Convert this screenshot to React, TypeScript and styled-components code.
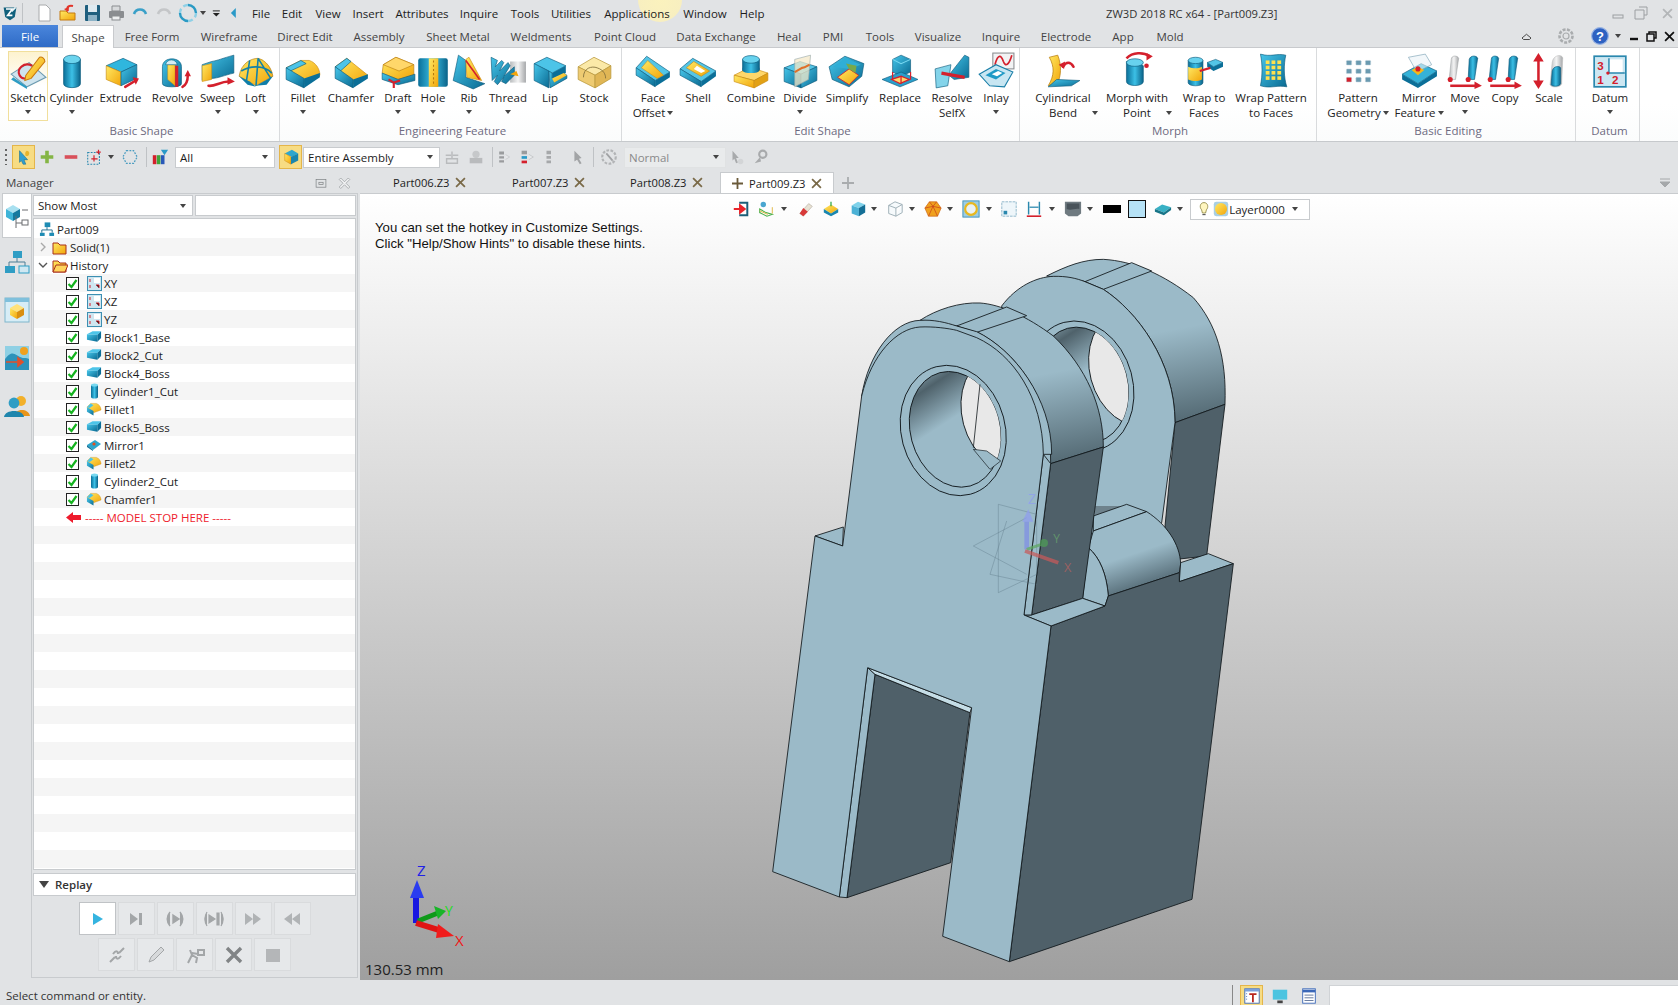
import React from "react";
import styled, { createGlobalStyle } from "styled-components";

const UI_FONT = `"Open Sans", "Noto Sans", "Liberation Sans", sans-serif`;

const GlobalStyle = createGlobalStyle`
  html, body { margin: 0; padding: 0; background: #e1e3e5; }
  #root { width: 1678px; height: 1005px; }
  * { box-sizing: border-box; }
`;

const Screen = styled.div`
  position: relative;
  width: 1678px;
  height: 1005px;
  overflow: hidden;
  display: flex;
  flex-direction: column;
  background: #e1e3e5;
  color: #1c1c1c;
  font-family: ${UI_FONT};
  font-size: 11.5px;
`;

const MouseGlow = styled.div`
  position: absolute;
  left: 638px;
  top: -22px;
  width: 44px;
  height: 44px;
  border-radius: 50%;
  background: radial-gradient(circle, #fbf2bd 0%, #f8efc0 70%, rgba(240, 230, 180, 0) 100%);
  pointer-events: none;
`;

/* ---------- title bar ---------- */
const TitleBar = styled.div`
  height: 26px;
  flex: none;
  display: flex;
  align-items: center;
  padding-left: 2px;
`;
const Slot = styled.span<{ $w: number; $ml?: number }>`
  flex: none;
  width: ${(p) => p.$w}px;
  margin-left: ${(p) => p.$ml ?? 0}px;
  display: flex;
  align-items: center;
  justify-content: center;
`;
const MenuItem = styled.span<{ $w: number }>`
  position: relative;
  flex: none;
  width: ${(p) => p.$w}px;
  text-align: center;
  font-size: 11.5px;
`;
const TitleText = styled.span`
  margin-left: 332px;
  font-size: 11.2px;
  color: #333;
  white-space: nowrap;
`;
const WindowButtons = styled.div`
  margin-left: auto;
  display: flex;
  align-items: center;
  padding-right: 3px;
`;

const Caret = styled.span`
  display: inline-block;
  width: 0;
  height: 0;
  border-left: 3px solid transparent;
  border-right: 3px solid transparent;
  border-top: 4px solid #444;
`;

/* ---------- ribbon tabs ---------- */
const TabsRow = styled.div`
  height: 22px;
  flex: none;
  display: flex;
  align-items: flex-end;
  padding-left: 2px;
  border-bottom: 1px solid #c8cacd;
  position: relative;
`;
const FileTab = styled.div`
  width: 56px;
  height: 22px;
  margin-right: 4px;
  background: linear-gradient(#4a86dc, #2f6bc6);
  color: #fff;
  font-size: 11.5px;
  display: flex;
  align-items: center;
  justify-content: center;
`;
const RibbonTab = styled.div<{ $w: number; $active?: boolean }>`
  flex: none;
  width: ${(p) => p.$w}px;
  height: ${(p) => (p.$active ? 23 : 22)}px;
  margin-bottom: ${(p) => (p.$active ? -1 : 0)}px;
  display: flex;
  align-items: center;
  justify-content: center;
  font-size: 11.5px;
  color: #444;
  white-space: nowrap;
  background: ${(p) => (p.$active ? "#fff" : "transparent")};
  border: ${(p) => (p.$active ? "1px solid #c8cacd" : "none")};
  border-bottom: none;
`;
const TabTools = styled.div`
  margin-left: auto;
  height: 22px;
  display: flex;
  align-items: center;
`;

/* ---------- ribbon ---------- */
const Ribbon = styled.div`
  height: 94px;
  flex: none;
  display: flex;
  background: linear-gradient(#ffffff 60%, #fbfcfc);
  border-bottom: 1px solid #c6c9cc;
`;
const RibbonGroup = styled.div<{ $w: number }>`
  flex: none;
  width: ${(p) => p.$w}px;
  display: flex;
  flex-direction: column;
  border-right: 1px solid #d9dbdd;
`;
const GroupItems = styled.div<{ $pad: number }>`
  height: 71px;
  margin-top: 4px;
  display: flex;
  padding-left: ${(p) => p.$pad}px;
`;
const GroupTitle = styled.div`
  height: 17px;
  line-height: 15px;
  padding-left: 4px;
  text-align: center;
  font-size: 11.5px;
  color: #6d6a80;
`;
const ToolButton = styled.div<{ $w: number; $hot?: boolean }>`
  flex: none;
  width: ${(p) => p.$w}px;
  height: 68px;
  display: flex;
  flex-direction: column;
  align-items: center;
  background: ${(p) => (p.$hot ? "linear-gradient(#fdf3cf, #fff 50%)" : "none")};
  outline: ${(p) => (p.$hot ? "1px solid #f1df9c" : "none")};
`;
const ToolIcon = styled.div`
  width: 38px;
  height: 38px;
  flex: none;
  svg { display: block; }
`;
const ToolLabel = styled.div`
  position: relative;
  line-height: 15px;
  text-align: center;
  white-space: nowrap;
  font-size: 11.5px;
  color: #222;
`;
const LabelCaret = styled(Caret)`
  margin-left: 2px;
  vertical-align: 2px;
`;
const SideCaret = styled(Caret)`
  position: absolute;
  left: 100%;
  top: 6px;
  margin-left: 15px;
`;
const BelowCaret = styled(Caret)`
  margin-top: 5px;
`;

/* ---------- toolbar ---------- */
const Toolbar = styled.div`
  height: 30px;
  flex: none;
  display: flex;
  align-items: center;
  padding-left: 2px;
`;
const Grip = styled.span`
  width: 2px;
  height: 16px;
  margin: 0 3px;
  background: repeating-linear-gradient(#666 0 2px, transparent 2px 5px);
`;
const ToolSep = styled.span<{ $w: number }>`
  flex: none;
  width: ${(p) => p.$w}px;
  height: 20px;
  display: flex;
  justify-content: center;
  &::before { content: ""; width: 1px; background: #bfc2c5; }
`;
const HotToggle = styled(Slot)`
  height: 24px;
  background: #f7dc83;
  border: 1px solid #e4b54a;
`;
const Combo = styled.div<{ $w: number; $ml?: number; $off?: boolean }>`
  flex: none;
  width: ${(p) => p.$w}px;
  margin-left: ${(p) => p.$ml ?? 0}px;
  height: 21px;
  display: flex;
  align-items: center;
  justify-content: space-between;
  padding: 0 6px 0 4px;
  font-size: 11.5px;
  color: ${(p) => (p.$off ? "#8a8a8a" : "#1c1c1c")};
  background: ${(p) => (p.$off ? "#e9ebec" : "#fff")};
  border: 1px solid ${(p) => (p.$off ? "#e0e2e3" : "#c8cbce")};
`;

/* ---------- main ---------- */
const Main = styled.div`
  flex: 1;
  min-height: 0;
  display: flex;
`;
const LeftColumn = styled.div`
  width: 360px;
  flex: none;
  display: flex;
  flex-direction: column;
`;
const ManagerHead = styled.div`
  height: 21px;
  flex: none;
  display: flex;
  align-items: center;
  padding: 0 8px 0 6px;
  font-size: 11.5px;
  color: #444;
`;
const HeadIcons = styled.span`
  margin-left: auto;
  display: flex;
  align-items: center;
  gap: 9px;
`;
const ManagerBody = styled.div`
  flex: 1;
  min-height: 0;
  display: flex;
  margin: 0 2px 2px 2px;
`;
const Rail = styled.div`
  width: 29px;
  flex: none;
  display: flex;
  flex-direction: column;
  align-items: center;
`;
const RailTab = styled.div<{ $active?: boolean }>`
  width: 29px;
  height: 45px;
  display: flex;
  align-items: center;
  justify-content: center;
  background: ${(p) => (p.$active ? "#fff" : "transparent")};
  border: ${(p) => (p.$active ? "1px solid #c8cbce" : "none")};
  border-right: none;
  margin-bottom: ${(p) => (p.$active ? 1 : 3)}px;
`;
const ManagerMain = styled.div`
  flex: 1;
  min-width: 0;
  display: flex;
  flex-direction: column;
  border: 1px solid #c8cbce;
  padding: 1px;
`;
const FilterRow = styled.div`
  height: 21px;
  flex: none;
  display: flex;
  gap: 2px;
  margin-bottom: 2px;
`;
const SearchBox = styled.div`
  flex: 1;
  background: #fff;
  border: 1px solid #c8cbce;
`;
const TreePanel = styled.div`
  flex: 1;
  min-height: 0;
  overflow: hidden;
  background: #fff;
  border: 1px solid #c8cbce;
  padding-top: 1px;
`;
const TreeRow = styled.div<{ $alt: boolean; $indent: number }>`
  height: 18px;
  display: flex;
  align-items: center;
  padding-left: ${(p) => p.$indent}px;
  background: ${(p) => (p.$alt ? "#f5f5f5" : "#fff")};
  font-size: 11.5px;
  white-space: nowrap;
`;
const Chevron = styled.span`
  width: 18px;
  flex: none;
  display: flex;
  justify-content: center;
`;
const CheckBox = styled.span`
  width: 13px;
  height: 13px;
  flex: none;
  margin-right: 7px;
  border: 1px solid #222;
  background: #fff;
  display: flex;
  align-items: center;
  justify-content: center;
`;
const RowIcon = styled.span`
  width: 16px;
  height: 16px;
  flex: none;
  margin-right: 2px;
  display: flex;
  align-items: center;
  justify-content: center;
`;
const StopText = styled.span`
  color: #ee1b2c;
  margin-left: 3px;
`;
const ReplayHead = styled.div`
  height: 23px;
  flex: none;
  margin-top: 3px;
  display: flex;
  align-items: center;
  gap: 6px;
  padding-left: 5px;
  background: #fff;
  border: 1px solid #c8cbce;
  font-weight: 600;
  font-size: 11.5px;
  color: #333;
`;
const ReplayCaret = styled.span`
  width: 0;
  height: 0;
  border-left: 5px solid transparent;
  border-right: 5px solid transparent;
  border-top: 7px solid #444;
`;
const ReplayPanel = styled.div`
  height: 80px;
  flex: none;
  display: flex;
  flex-direction: column;
  align-items: center;
  gap: 3px;
  padding-top: 6px;
`;
const ReplayRow = styled.div`
  display: flex;
  gap: 2px;
`;
const ReplayButton = styled.div<{ $on?: boolean }>`
  width: 37px;
  height: 33px;
  display: flex;
  align-items: center;
  justify-content: center;
  background: ${(p) => (p.$on ? "#fff" : "#e6e8ea")};
  border: 1px solid ${(p) => (p.$on ? "#c0c3c6" : "#d9dbdd")};
`;

const RightColumn = styled.div`
  flex: 1;
  min-width: 0;
  display: flex;
  flex-direction: column;
`;
const DocTabs = styled.div`
  height: 21px;
  flex: none;
  display: flex;
  align-items: center;
  position: relative;
`;
const DocTab = styled.div<{ $w: number; $active?: boolean; $pl: number }>`
  flex: none;
  width: ${(p) => p.$w}px;
  height: 21px;
  padding-left: ${(p) => p.$pl}px;
  display: flex;
  align-items: center;
  gap: 6px;
  font-size: 11.2px;
  white-space: nowrap;
  background: ${(p) => (p.$active ? "#fff" : "transparent")};
  border: ${(p) => (p.$active ? "1px solid #c8cbce" : "none")};
  border-bottom: none;
`;
const DocTabsEnd = styled.span`
  margin-left: auto;
  padding-right: 6px;
  display: flex;
`;
const Viewport = styled.div`
  position: relative;
  flex: 1;
  min-height: 0;
  overflow: hidden;
  background: linear-gradient(#ffffff 0%, #fbfbfb 4%, #9f9f9f 100%);
  border-top: 1px solid #c8cbce;
`;
const ModelCanvas = styled.svg`
  position: absolute;
  left: 0;
  top: 0;
  width: 100%;
  height: 100%;
`;
const ViewBar = styled.div`
  position: relative;
  height: 30px;
  display: flex;
  align-items: center;
  padding-left: 369px;
`;
const Hints = styled.div`
  position: absolute;
  left: 15px;
  top: 26px;
  font-family: "Liberation Sans", Arial, sans-serif;
  font-size: 13.2px;
  line-height: 16px;
  color: #111;
`;
const Distance = styled.div`
  position: absolute;
  left: 5px;
  bottom: 1px;
  font-size: 15px;
  color: #222;
`;

/* ---------- status ---------- */
const StatusBar = styled.div`
  height: 25px;
  flex: none;
  display: flex;
  align-items: center;
  padding: 5px 0 0 6px;
  font-size: 11.5px;
  color: #333;
`;
const StatusTools = styled.div`
  margin-left: auto;
  height: 20px;
  display: flex;
  align-items: flex-end;
`;
const StatusSep = styled.span`
  width: 1px;
  height: 20px;
  background: #888;
  margin-right: 7px;
`;
const StatusHot = styled(Slot)`
  height: 20px;
  background: #f7dc83;
  border: 1px solid #e4b54a;
  border-bottom: none;
`;
const StatusField = styled.div`
  width: 349px;
  height: 20px;
  margin-left: 8px;
  background: #fff;
  border: 1px solid #d0d3d6;
  border-bottom: none;
  border-right: none;
`;

/* ---------- shared gradients ---------- */
const GradientDefs = styled.svg`
  position: absolute;
  width: 0;
  height: 0;
`;
const Defs = () => (
  <GradientDefs>
    <defs>
      <linearGradient id="bl" x1="0" y1="0" x2="1" y2="1">
        <stop offset="0" stopColor="#46c6ea" />
        <stop offset="1" stopColor="#0a6a92" />
      </linearGradient>
      <linearGradient id="bh" x1="0" y1="0" x2="1" y2="0">
        <stop offset="0" stopColor="#0a6f98" />
        <stop offset=".5" stopColor="#3cc0e6" />
        <stop offset="1" stopColor="#0a6288" />
      </linearGradient>
      <linearGradient id="yl" x1="0" y1="0" x2="1" y2="1">
        <stop offset="0" stopColor="#ffe964" />
        <stop offset="1" stopColor="#f2a50a" />
      </linearGradient>
      <linearGradient id="gy" x1="0" y1="0" x2="1" y2="0">
        <stop offset="0" stopColor="#b9bcbe" />
        <stop offset=".5" stopColor="#f4f4f4" />
        <stop offset="1" stopColor="#a6a8aa" />
      </linearGradient>
      <linearGradient id="earA" gradientUnits="userSpaceOnUse" x1="900" y1="390" x2="950" y2="650">
        <stop offset="0" stopColor="#9bbac8" />
        <stop offset="1" stopColor="#566c76" />
      </linearGradient>
      <linearGradient id="earB" gradientUnits="userSpaceOnUse" x1="1270" y1="260" x2="1320" y2="525">
        <stop offset="0" stopColor="#9bbac8" />
        <stop offset="1" stopColor="#566c76" />
      </linearGradient>
      <linearGradient id="wall" x1="0" y1="0" x2=".25" y2="1">
        <stop offset="0" stopColor="#8ba6b2" />
        <stop offset=".17" stopColor="#4f626b" />
        <stop offset=".5" stopColor="#9bbac8" />
        <stop offset="1" stopColor="#9bbac8" />
      </linearGradient>
      <linearGradient id="bump" gradientUnits="userSpaceOnUse" x1="1100" y1="890" x2="1148" y2="1032">
        <stop offset=".35" stopColor="#9bbac8" />
        <stop offset="1" stopColor="#5c737e" />
      </linearGradient>
    </defs>
  </GradientDefs>
);

/* ---------- icons ---------- */
const line = { stroke: "#0c5a7c", strokeWidth: 0.6 };

const CubeBY = () => (
  <>
    <path d="M4 13 20 6 33 12 18 19Z" fill="#2fb6de" {...line} />
    <path d="M4 13 18 19V32L4 26Z" fill="url(#yl)" stroke="#c98a10" strokeWidth=".6" />
    <path d="M18 19 33 12V25L18 32Z" fill="url(#bl)" {...line} />
  </>
);
const RedArrow = ({ d }: { d: string }) => <path d={d} fill="none" stroke="#d4202c" strokeWidth="2.4" strokeLinecap="round" />;

const ribbonArt: Record<string, React.ReactNode> = {
  sketch: (
    <>
      <path d="M2 21 19 10 35 24 17 33Z" fill="#cfe4ee" stroke="#6d9bb1" />
      <path d="M4 24 17 33V35L2 26Z" fill="#2d9cc4" />
      <path d="M22 13C14 9 7 16 10 22 12 26 17 26 20 23" fill="none" stroke="#d4202c" strokeWidth="2" />
      <path d="M16 22 29 5C31 4 34 6 34 9L21 25 15 27Z" fill="url(#yl)" stroke="#c9780f" />
    </>
  ),
  cylinder: (
    <>
      <path d="M10 7V30C10 35 26 35 26 30V7Z" fill="url(#bh)" stroke="#0a5a7c" strokeWidth=".6" />
      <ellipse cx="18" cy="7" rx="8" ry="4" fill="#6cd4ee" stroke="#0a5a7c" strokeWidth=".6" />
    </>
  ),
  extrude: (
    <>
      <CubeBY />
      <RedArrow d="M22 33 32 27" />
      <path d="M29 24 35 25 32 31Z" fill="#d4202c" />
    </>
  ),
  revolve: (
    <>
      <path d="M8 14C8 4 26 4 26 14V30C26 34 8 34 8 30Z" fill="url(#bl)" stroke="#0a5a7c" strokeWidth=".6" />
      <path d="M13 12H20V32L13 26Z" fill="url(#yl)" stroke="#c98a10" strokeWidth=".5" />
      <path d="M11 12C12 6 21 6 22 12Z" fill="#d5ecf4" stroke="#0a5a7c" strokeWidth=".5" />
      <path d="M20 13H23V33L20 33Z" fill="#d4202c" />
      <RedArrow d="M27 33C31 31 32 27 32 22" />
      <path d="M29 23 32 17 35 23Z" fill="#d4202c" />
    </>
  ),
  sweep: (
    <>
      <path d="M3 12 12 9C18 8 22 6 33 3V20C24 22 18 25 12 25L3 27Z" fill="url(#bl)" {...line} />
      <path d="M3 13 12 11V26L3 28Z" fill="url(#yl)" stroke="#c98a10" strokeWidth=".5" />
      <RedArrow d="M9 32C15 33 20 28 28 28" />
      <path d="M27 24 34 28 27 31Z" fill="#d4202c" />
    </>
  ),
  loft: (
    <>
      <path d="M2 23C4 10 14 6 20 6 28 8 33 16 34 23L18 32Z" fill="url(#yl)" stroke="#a9750c" strokeWidth=".6" />
      <path d="M12 8 9 27M20 6 18 32M20 6 32 25M4 18C14 12 26 13 33 20" fill="none" stroke="#1282aa" strokeWidth="1.5" />
      <path d="M2 23 12 28 18 33 10 31Z" fill="#0f7ea8" />
      <path d="M18 32 34 23 28 31Z" fill="#0f7ea8" />
    </>
  ),
  fillet: (
    <>
      <path d="M2 15 16 8H24C30 10 34 16 34 22L19 30Z" fill="url(#yl)" stroke="#c98a10" strokeWidth=".6" />
      <path d="M2 15 16 8 21 11 6 18Z" fill="#4cc4e8" {...line} />
      <path d="M2 15 19 25V34L2 26Z" fill="url(#bl)" {...line} />
      <path d="M19 25 34 20V24L19 34Z" fill="#0b6f98" />
    </>
  ),
  chamfer: (
    <>
      <path d="M3 14 14 6 34 22 20 30Z" fill="url(#yl)" stroke="#c98a10" strokeWidth=".6" />
      <path d="M3 14 14 6 18 9 8 18Z" fill="#4cc4e8" {...line} />
      <path d="M3 14 20 26V34L3 25Z" fill="url(#bl)" {...line} />
      <path d="M20 26 34 21V25L20 34Z" fill="#0b6f98" />
    </>
  ),
  draft: (
    <>
      <path d="M4 12 16 5 33 12 33 22 18 26 3 20Z" fill="url(#yl)" stroke="#b97d0e" strokeWidth=".6" />
      <path d="M4 12 16 5 33 12 19 18Z" fill="#ffd76a" stroke="#b97d0e" strokeWidth=".6" />
      <path d="M3 20 18 26 34 21 34 27 18 31 3 26Z" fill="url(#bl)" {...line} />
      <path d="M14 34 14 29 9 26M14 29 20 27" fill="none" stroke="#d4202c" strokeWidth="2" />
    </>
  ),
  hole: (
    <>
      <rect x="4" y="6" width="28" height="27" rx="2" fill="url(#bh)" />
      <rect x="14" y="6" width="9" height="27" fill="url(#yl)" />
      <path d="M18.5 8V32" stroke="#b57b10" strokeWidth="1" strokeDasharray="2 2" />
    </>
  ),
  rib: (
    <>
      <path d="M8 3 15 8V24L33 30 22 35 3 27Z" fill="url(#bl)" {...line} />
      <path d="M15 7 18 5 30 27 16 24Z" fill="url(#yl)" stroke="#c98a10" strokeWidth=".6" />
      <path d="M15 8 28 26" stroke="#d4202c" strokeWidth="1.5" />
    </>
  ),
  thread: (
    <>
      <rect x="20" y="9" width="15" height="20" fill="url(#gy)" />
      <path d="M2 5 8 8 6 14 12 8 14 10 10 18 18 10 20 13 14 23 24 14V22L16 30 12 28 14 24 8 31 5 28 8 22 3 27Z" fill="url(#bl)" {...line} />
      <path d="M20 21 26 18 28 23Z" fill="#f2a50a" />
    </>
  ),
  lip: (
    <>
      <path d="M3 11 15 5 33 13 20 20Z" fill="#4cc4e8" {...line} />
      <path d="M3 11 17 18V34L3 27Z" fill="url(#bl)" {...line} />
      <path d="M17 18 20 20V25L31 20 34 22V25L18 34Z" fill="url(#bl)" {...line} />
      <path d="M20 20 33 13V20L20 25Z" fill="#0b6f98" />
      <path d="M20 25 31 20 34 22 22 29Z" fill="url(#yl)" />
    </>
  ),
  stock: (
    <>
      <path d="M3 14 18 5 34 13 19 22Z" fill="#fbe9a8" stroke="#b9983c" strokeWidth=".7" />
      <path d="M3 14 19 22V34L3 26Z" fill="#eecb72" stroke="#b9983c" strokeWidth=".7" />
      <path d="M19 22 34 13V25L19 34Z" fill="#e0b655" stroke="#b9983c" strokeWidth=".7" />
      <path d="M8 24C8 15 16 13 21 15 27 17 29 21 29 25" fill="none" stroke="#7f6d3a" strokeWidth=".8" />
    </>
  ),
  faceOffset: (
    <>
      <path d="M2 15 12 4 34 19 20 27Z" fill="#53c5e6" {...line} />
      <path d="M7 15 13 8 28 22 22 25Z" fill="url(#yl)" stroke="#c98a10" strokeWidth=".5" />
      <path d="M2 15 20 27V33L2 22Z" fill="url(#bl)" {...line} />
      <path d="M20 27 34 19V24L20 33Z" fill="#0b6f98" />
    </>
  ),
  shell: (
    <>
      <path d="M1 16 13 6 35 18 21 28Z" fill="#53c5e6" {...line} />
      <path d="M7 15 14 9 29 18 21 23Z" fill="url(#yl)" stroke="#c98a10" strokeWidth=".6" />
      <path d="M14 16 17 13 25 18 21 20Z" fill="#fff" />
      <path d="M1 16 21 28V33L1 22Z" fill="url(#bl)" {...line} />
      <path d="M21 28 35 18V23L21 33Z" fill="#0b6f98" />
    </>
  ),
  combine: (
    <>
      <path d="M10 7V24C10 28 26 28 26 24V7Z" fill="url(#bh)" {...line} />
      <ellipse cx="18" cy="7" rx="8" ry="3.6" fill="#67d2ee" {...line} />
      <path d="M2 22 12 17H25L34 20 21 27Z" fill="#ffd76a" stroke="#c98a10" strokeWidth=".6" />
      <path d="M10 17C10 21 26 21 26 17L26 15H10Z" fill="url(#bh)" />
      <path d="M2 22 21 27V34L2 28Z" fill="url(#yl)" stroke="#c98a10" strokeWidth=".6" />
      <path d="M21 27 34 20V27L21 34Z" fill="#e2a115" stroke="#c98a10" strokeWidth=".6" />
    </>
  ),
  divide: (
    <>
      <path d="M3 15 18 9 34 14 19 21Z" fill="#53c5e6" {...line} />
      <path d="M3 15 19 21V34L3 28Z" fill="url(#bl)" {...line} />
      <path d="M19 21 34 14V27L19 34Z" fill="url(#bl)" {...line} />
      <path d="M13 7 28 3 26 26 13 33Z" fill="#f4e8c8" fillOpacity=".75" stroke="#9aa" strokeWidth=".6" />
      <path d="M13 19 20 15C23 15 25 13 27 12" fill="none" stroke="#e0702a" strokeWidth="2" />
    </>
  ),
  simplify: (
    <>
      <path d="M1 14 16 4 34 11 32 23 20 33 4 26Z" fill="url(#bl)" {...line} />
      <path d="M5 14 17 6 31 12 20 16Z" fill="#2faed6" />
      <path d="M9 24 20 16 29 22 20 31Z" fill="url(#yl)" stroke="#d4202c" strokeWidth=".8" />
      <path d="M17 11 27 13 26 20 20 16Z" fill="#78a94a" />
    </>
  ),
  replace: (
    <>
      <path d="M11 7 19 3 28 7 28 19 19 23 11 19Z" fill="url(#bl)" {...line} />
      <path d="M11 7 19 11 28 7" fill="none" stroke="#7bdaf2" />
      <path d="M1 26 19 19 35 26 18 33Z" fill="#2a9fcb" {...line} />
      <path d="M10 26 19 23 27 26 18 30Z" fill="#ffd76a" stroke="#d4202c" strokeWidth="1.2" />
      <path d="M11 19V26M28 19V26M19 23V30" stroke="#d4202c" strokeWidth="1.2" />
    </>
  ),
  resolve: (
    <>
      <path d="M2 16 17 12 14 32 3 34Z" fill="#84d4ea" {...line} />
      <path d="M15 22 30 3 34 5V24L20 26Z" fill="url(#bl)" {...line} />
      <path d="M8 20 30 24" stroke="#d4202c" strokeWidth="3" />
    </>
  ),
  inlay: (
    <>
      <rect x="15" y="1" width="20" height="15" fill="#f2f3f4" stroke="#8a8d90" />
      <path d="M17 12C20 1 23 3 25 9 27 14 30 13 33 3" fill="none" stroke="#d4202c" strokeWidth="1.6" />
      <path d="M2 21 18 12 34 19 26 33 12 32Z" fill="#c8e6f2" stroke="#1a7fa8" />
      <path d="M8 22 18 16 27 20 18 26Z" fill="#1f9ac6" />
      <path d="M14 21 20 18 24 20 19 23Z" fill="#fff" />
    </>
  ),
  bend: (
    <>
      <path d="M5 5 13 3C17 13 16 23 13 29L4 32C10 22 10 14 5 5Z" fill="url(#yl)" stroke="#b97d0e" strokeWidth=".7" />
      <path d="M12 26 34 27 26 32 4 33Z" fill="url(#bl)" {...line} />
      <RedArrow d="M18 14C21 9 25 9 28 14" />
      <path d="M14 12 20 9 19 16Z" fill="#d4202c" />
    </>
  ),
  morph: (
    <>
      <path d="M8 9V28C8 33 24 33 24 28V13L18 9Z" fill="url(#bh)" {...line} />
      <ellipse cx="16" cy="10" rx="8" ry="3.6" fill="#67d2ee" {...line} />
      <path d="M8 6C14 0 24 0 30 4" fill="none" stroke="#d4202c" strokeWidth="2.4" />
      <path d="M27 1 33 4 27 8Z" fill="#d4202c" />
      <circle cx="27" cy="13" r="2.2" fill="#d4202c" />
    </>
  ),
  wrap: (
    <>
      <path d="M3 8V29C3 33 17 33 17 29V8Z" fill="url(#bh)" {...line} />
      <ellipse cx="10" cy="8" rx="7" ry="3" fill="#67d2ee" {...line} />
      <path d="M3 14C8 16 12 16 16 14V26C12 28 8 28 3 26Z" fill="url(#yl)" />
      <path d="M21 10 29 7 36 10 27 14Z" fill="#53c5e6" {...line} />
      <path d="M21 10 27 14V18L21 14ZM27 14 36 10V14L27 18Z" fill="#0b6f98" />
      <path d="M14 18 24 15" stroke="#d4202c" strokeWidth="2.2" />
    </>
  ),
  wrapPattern: (
    <>
      <path d="M8 2C18 5 24 1 32 3 30 12 30 24 33 33 24 31 18 35 8 32 10 22 10 12 8 2Z" fill="url(#bl)" {...line} />
      {[10, 15, 20, 25].map((y) => [13, 18.5, 24].map((x) => <rect key={`${x}-${y}`} x={x} y={y - 2} width="3.6" height="3.4" fill="#ffe14d" />))}
    </>
  ),
  pattern: (
    <>
      {[8, 16, 24].map((y, r) =>
        [7, 16, 25].map((x, c) => (
          <rect key={`${r}-${c}`} x={x} y={y} width="5" height="4.4" rx=".8" fill={r === 2 && c === 0 ? "#d4202c" : "#6a9ab0"} stroke="#c5d6de" strokeWidth=".5" />
        ))
      )}
    </>
  ),
  mirror: (
    <>
      <path d="M2 21 20 11 35 18 17 30Z" fill="#35b2d8" {...line} />
      <path d="M2 21 17 30V34L2 26ZM17 30 35 18V23L17 34Z" fill="#0b6f98" />
      <path d="M8 5 24 2 30 12 16 19Z" fill="#e9f2f6" fillOpacity=".6" stroke="#7ba2b4" strokeWidth=".6" />
      <path d="M11 17 17 14 23 17 17 22Z" fill="#f6b818" />
      <circle cx="17" cy="16" r="2.4" fill="#d4202c" />
    </>
  ),
  move: (
    <>
      <path d="M5 7C5 3 11 3 12 6L9 26H3Z" fill="url(#gy)" stroke="#9b9ea0" strokeWidth=".5" />
      <path d="M22 7C23 3 29 3 30 6L27 26H21Z" fill="url(#bh)" {...line} />
      <circle cx="4" cy="26" r="2.4" fill="#d4202c" />
      <circle cx="21" cy="26" r="2.4" fill="#d4202c" />
      <path d="M4 32H28" stroke="#d4202c" strokeWidth="2.4" />
      <path d="M27 28 34 32 27 35Z" fill="#d4202c" />
    </>
  ),
  copy: (
    <>
      <path d="M5 7C5 3 11 3 12 6L9 26H3Z" fill="url(#bh)" {...line} />
      <path d="M22 7C23 3 29 3 30 6L27 26H21Z" fill="url(#bh)" {...line} />
      <circle cx="4" cy="26" r="2.4" fill="#d4202c" />
      <circle cx="21" cy="26" r="2.4" fill="#d4202c" />
      <path d="M4 32H28" stroke="#d4202c" strokeWidth="2.4" />
      <path d="M27 28 34 32 27 35Z" fill="#d4202c" />
    </>
  ),
  scale: (
    <>
      <path d="M8 5V31" stroke="#d4202c" strokeWidth="2.4" />
      <path d="M3 9 8 1 13 9ZM3 27 8 35 13 27Z" fill="#d4202c" />
      <path d="M21 10C22 2 31 2 31 6L30 30C29 34 20 34 19 31Z" fill="url(#gy)" stroke="#bbb" strokeWidth=".5" />
      <path d="M21 18C22 13 28 13 29 15L29 30C28 33 21 33 20 31Z" fill="url(#bh)" {...line} />
    </>
  ),
  datum: (
    <>
      <rect x="3" y="4" width="30" height="29" fill="#cde7f2" stroke="#2a88ae" strokeWidth="1.6" />
      <rect x="17" y="7" width="13" height="13" fill="#fff" />
      <path d="M17 6V20H32" fill="none" stroke="#2a88ae" strokeWidth="1.4" />
      <text x="6" y="17" fontFamily="Liberation Sans, sans-serif" fontSize="11" fontWeight="700" fill="#d4202c">3</text>
      <text x="6" y="30" fontFamily="Liberation Sans, sans-serif" fontSize="11" fontWeight="700" fill="#d4202c">1</text>
      <text x="20" y="30" fontFamily="Liberation Sans, sans-serif" fontSize="11" fontWeight="700" fill="#d4202c">2</text>
      <circle cx="16" cy="20" r="1.6" fill="#d4202c" />
    </>
  ),
};

type Tool = { id: string; lines: string[]; w: number; caret?: "below" | "inline" | "side" };
type Group = { title: string; w: number; pad: number; tools: Tool[] };

const groups: Group[] = [
  {
    title: "Basic Shape", w: 280, pad: 9,
    tools: [
      { id: "sketch", lines: ["Sketch"], w: 38, caret: "below" },
      { id: "cylinder", lines: ["Cylinder"], w: 49, caret: "below" },
      { id: "extrude", lines: ["Extrude"], w: 49 },
      { id: "revolve", lines: ["Revolve"], w: 55 },
      { id: "sweep", lines: ["Sweep"], w: 35, caret: "below" },
      { id: "loft", lines: ["Loft"], w: 41, caret: "below" },
    ],
  },
  {
    title: "Engineering Feature", w: 342, pad: 1,
    tools: [
      { id: "fillet", lines: ["Fillet"], w: 44, caret: "below" },
      { id: "chamfer", lines: ["Chamfer"], w: 52 },
      { id: "draft", lines: ["Draft"], w: 42, caret: "below" },
      { id: "hole", lines: ["Hole"], w: 28, caret: "below" },
      { id: "rib", lines: ["Rib"], w: 44, caret: "below" },
      { id: "thread", lines: ["Thread"], w: 34, caret: "below" },
      { id: "lip", lines: ["Lip"], w: 50 },
      { id: "stock", lines: ["Stock"], w: 38 },
    ],
  },
  {
    title: "Edit Shape", w: 398, pad: 8,
    tools: [
      { id: "faceOffset", lines: ["Face", "Offset"], w: 46, caret: "inline" },
      { id: "shell", lines: ["Shell"], w: 44 },
      { id: "combine", lines: ["Combine"], w: 62 },
      { id: "divide", lines: ["Divide"], w: 36, caret: "below" },
      { id: "simplify", lines: ["Simplify"], w: 58 },
      { id: "replace", lines: ["Replace"], w: 48 },
      { id: "resolve", lines: ["Resolve", "SelfX"], w: 56 },
      { id: "inlay", lines: ["Inlay"], w: 32, caret: "below" },
    ],
  },
  {
    title: "Morph", w: 297, pad: 6,
    tools: [
      { id: "bend", lines: ["Cylindrical", "Bend"], w: 74, caret: "side" },
      { id: "morph", lines: ["Morph with", "Point"], w: 74, caret: "side" },
      { id: "wrap", lines: ["Wrap to", "Faces"], w: 60 },
      { id: "wrapPattern", lines: ["Wrap Pattern", "to Faces"], w: 74 },
    ],
  },
  {
    title: "Basic Editing", w: 259, pad: 5,
    tools: [
      { id: "pattern", lines: ["Pattern", "Geometry"], w: 72, caret: "inline" },
      { id: "mirror", lines: ["Mirror", "Feature"], w: 50, caret: "inline" },
      { id: "move", lines: ["Move"], w: 42, caret: "below" },
      { id: "copy", lines: ["Copy"], w: 38 },
      { id: "scale", lines: ["Scale"], w: 50 },
    ],
  },
  {
    title: "Datum", w: 64, pad: 4,
    tools: [{ id: "datum", lines: ["Datum"], w: 60, caret: "below" }],
  },
];

const menus: [string, number][] = [
  ["File", 30], ["Edit", 32], ["View", 40], ["Insert", 40], ["Attributes", 68], ["Inquire", 46],
  ["Tools", 46], ["Utilities", 46], ["Applications", 86], ["Window", 50], ["Help", 44],
];
const ribbonTabs: [string, number][] = [
  ["Shape", 52], ["Free Form", 76], ["Wireframe", 78], ["Direct Edit", 74], ["Assembly", 74],
  ["Sheet Metal", 84], ["Weldments", 82], ["Point Cloud", 86], ["Data Exchange", 96], ["Heal", 50],
  ["PMI", 38], ["Tools", 56], ["Visualize", 60], ["Inquire", 66], ["Electrode", 64], ["App", 50], ["Mold", 44],
];

const Art = ({ s, vb = 36, children }: { s: number; vb?: number; children: React.ReactNode }) => (
  <svg width={s} height={s} viewBox={`0 0 ${vb} ${vb}`}>{children}</svg>
);

/* small glyphs, all on a 20 unit grid */
const small: Record<string, React.ReactNode> = {
  logo: (
    <>
      <path d="M2 3H18L16 15 10 19 4 15Z" fill="#10607c" />
      <path d="M5 5 13 5 7 13H13" fill="none" stroke="#fff" strokeWidth="2" />
      <path d="M12 8 17 3" stroke="#e8f4f8" strokeWidth="2" />
    </>
  ),
  newDoc: <path d="M5 2H12L16 6V18H5Z" fill="#fff" stroke="#a8aaac" />,
  open: (
    <>
      <path d="M2 8H8L10 10H17V17H2Z" fill="url(#yl)" stroke="#c47a10" />
      <path d="M10 8C8 4 11 2 15 3" fill="none" stroke="#e2342a" strokeWidth="2" />
      <path d="M6 6 11 4 10 9Z" fill="#e2342a" />
    </>
  ),
  save: (
    <>
      <rect x="3" y="2" width="15" height="16" rx="1" fill="#1f5f7e" />
      <rect x="6" y="2" width="9" height="7" fill="#dfeaf0" />
      <rect x="6" y="12" width="9" height="6" fill="#8cb2c6" />
    </>
  ),
  print: (
    <>
      <rect x="3" y="8" width="15" height="7" rx="1" fill="#8a8d90" />
      <path d="M6 8V3H14V8Z" fill="#d8dadc" stroke="#8a8d90" />
      <rect x="6" y="13" width="8" height="4" fill="#eceeef" stroke="#8a8d90" />
    </>
  ),
  undo: <path d="M4 11C6 5 14 5 16 11" fill="none" stroke="#3aa0c8" strokeWidth="2.6" />,
  redo: <path d="M4 11C6 5 14 5 16 11" fill="none" stroke="#c4c6c8" strokeWidth="2.6" />,
  rotate: (
    <>
      <path d="M10 2A8 8 0 0 1 18 10M10 18A8 8 0 0 1 2 10" fill="none" stroke="#2a9ac4" strokeWidth="2.4" />
      <path d="M10 2A8 8 0 0 0 2 10M10 18A8 8 0 0 0 18 10" fill="none" stroke="#8fd0e6" strokeWidth="2.4" strokeDasharray="5 3" />
    </>
  ),
  bars: (
    <>
      <path d="M4 7H14" stroke="#222" strokeWidth="1.4" />
      <path d="M4 10H14L9 15Z" fill="#222" />
    </>
  ),
  leftBlue: <path d="M14 3 7 10 14 17Z" fill="#2a9ac8" />,
  gear: (
    <>
      <circle cx="10" cy="10" r="6.5" fill="none" stroke="#a9acae" strokeWidth="2.6" strokeDasharray="3 1.4" />
      <circle cx="10" cy="10" r="3" fill="none" stroke="#a9acae" strokeWidth="1.2" />
    </>
  ),
  help: (
    <>
      <circle cx="10" cy="10" r="8.4" fill="#2e62c2" stroke="#9db7e4" strokeWidth="1.2" />
      <text x="10" y="14.5" textAnchor="middle" fontFamily="Liberation Sans, sans-serif" fontSize="13" fontWeight="700" fill="#fff">?</text>
    </>
  ),
  up: <path d="M4 12 10 7 16 12 14 14H6Z" fill="none" stroke="#444" strokeWidth="1.3" />,
  cursor: (
    <>
      <path d="M5 3 14 13H10L12 18 9 18 7 14 5 16Z" fill="#2f9fd0" stroke="#146b90" strokeWidth=".6" />
      <path d="M13 3C16 3 17 7 14 9H12C11 7 11 4 13 3Z" fill="#e9b52a" />
    </>
  ),
  plus: <path d="M10 3V17M3 10H17" stroke="#84b545" strokeWidth="4" />,
  minus: <path d="M3 10H17" stroke="#d9505a" strokeWidth="4" />,
  dotBox: (
    <>
      <rect x="3" y="5" width="13" height="13" fill="none" stroke="#2a88ae" strokeWidth="1.2" strokeDasharray="2 1.4" />
      <path d="M10 8V15M7 12H14M15 2V7M12.5 4.5H17.5" stroke="#d4202c" strokeWidth="1.3" />
    </>
  ),
  hex: <path d="M6 3H14L18 10 14 17H6L2 10Z" fill="none" stroke="#4a9cc0" strokeWidth="1.4" strokeDasharray="2 1.4" />,
  filter: (
    <>
      <rect x="2" y="8" width="4" height="10" fill="#d4202c" />
      <rect x="6.5" y="8" width="4" height="10" fill="#3fa43a" />
      <rect x="11" y="8" width="4" height="10" fill="#2858b8" />
      <path d="M11 2H19L15 8Z" fill="#2a9ac8" />
    </>
  ),
  asm: (
    <>
      <path d="M3 6 11 2 18 6 11 10Z" fill="#2fa6cc" />
      <path d="M3 6 10 10V18L3 14Z" fill="url(#yl)" stroke="#c47a10" strokeWidth=".5" />
      <path d="M10 10 18 6V14L10 18Z" fill="#1a86ae" />
    </>
  ),
  gray1: <path d="M3 8H9M11 8H17M10 4V12M4 12H16V17H4Z" fill="none" stroke="#b9bbbd" strokeWidth="1.6" />,
  gray2: (
    <>
      <circle cx="10" cy="7" r="4" fill="#c6c8ca" />
      <rect x="3" y="11" width="14" height="6" fill="#b9bbbd" />
    </>
  ),
  gray3: (
    <>
      <path d="M4 3H10V7H4ZM4 9H10V12H4ZM4 14H10V17H4Z" fill="#9a9c9e" />
      <path d="M12 7 17 10 12 13" fill="#e6e8ea" stroke="#c5c7c9" />
    </>
  ),
  gray4: (
    <>
      <path d="M4 3H10V7H4Z" fill="#9a9c9e" />
      <path d="M4 9H10V12H4Z" fill="#2a9ac8" />
      <path d="M4 14H10V17H4Z" fill="#d4202c" />
      <path d="M12 7 17 10 12 13" fill="#e6e8ea" stroke="#c5c7c9" />
    </>
  ),
  gray5: <path d="M5 3H10V7H5ZM5 9H10V12H5ZM5 14H10V17H5Z" fill="#a6a8aa" />,
  gray6: <path d="M6 3 14 11 11 12 14 17 12 18 9 13 6 15Z" fill="#a2a4a6" />,
  gray7: (
    <>
      <circle cx="10" cy="10" r="7.5" fill="none" stroke="#b2b4b6" strokeWidth="2.4" strokeDasharray="3 1.6" />
      <path d="M7 6 14 14" stroke="#a0a2a4" strokeWidth="2" />
    </>
  ),
  gray8: (
    <>
      <path d="M5 3 12 11H9L11 16 9 17 7 12 5 14Z" fill="#a8aaac" />
      <circle cx="14" cy="15" r="3" fill="#d3d5d7" />
    </>
  ),
  gray9: (
    <>
      <circle cx="12" cy="7" r="4" fill="none" stroke="#a8aaac" strokeWidth="2.4" />
      <path d="M3 17 9 10 10 15Z" fill="#a8aaac" />
    </>
  ),
  exit: (
    <>
      <path d="M8 3H17V17H8" fill="none" stroke="#1c5f78" strokeWidth="2.2" />
      <path d="M2 10H9M9 6V14L14 10Z" fill="#e8252a" stroke="#e8252a" strokeWidth="2.4" />
    </>
  ),
  network: (
    <>
      <path d="M3 10 10 14 17 16 11 18 3 14Z" fill="none" stroke="#4cb04c" strokeWidth="1.2" />
      <path d="M17 8V15M3 12 12 16" stroke="#e0b43a" strokeWidth="1" />
      <circle cx="7" cy="5" r="3" fill="#4aa6d0" />
    </>
  ),
  eraser: (
    <>
      <path d="M3 15 13 4 17 7 7 18Z" fill="#e8e2d4" stroke="#a9a294" strokeWidth=".6" />
      <path d="M3 15 7 9 12 13 7 18Z" fill="#d83a3a" />
    </>
  ),
  shade: (
    <>
      <path d="M2 10 10 5 18 10 10 15Z" fill="url(#yl)" />
      <path d="M2 10 10 15V18L2 14ZM10 15 18 10V14L10 18Z" fill="#1a86ae" />
      <path d="M10 2V7" stroke="#2fa64a" strokeWidth="1.4" />
    </>
  ),
  cube: (
    <>
      <path d="M3 6 10 2 18 5 11 9Z" fill="#7fd2ea" />
      <path d="M3 6 11 9V18L3 15Z" fill="#4cb2d6" />
      <path d="M11 9 18 5V14L11 18Z" fill="#146f96" />
    </>
  ),
  wire: <path d="M3 6 10 2 18 5 11 9ZM3 6V15L11 18V9M11 18 18 14V5" fill="#f6fafc" stroke="#98aab2" strokeWidth="1" />,
  ball: (
    <>
      <path d="M6 2H14L19 9 15 18H5L1 9Z" fill="#f0a11e" stroke="#d06a18" strokeWidth=".8" />
      <path d="M10 7 1 9M10 7 14 2M10 7 6 2M10 7 19 9M10 7 15 18M10 7 5 18" stroke="#c8401c" strokeWidth=".8" />
    </>
  ),
  ring: (
    <>
      <rect x="1" y="1" width="18" height="18" fill="#9ccde4" stroke="#3e8fb4" />
      <circle cx="10" cy="10" r="6.5" fill="#e9f1f4" stroke="#e8b81e" strokeWidth="2.4" />
    </>
  ),
  rect: (
    <>
      <rect x="2" y="2" width="16" height="16" fill="#eef6fa" stroke="#8ab4c8" strokeDasharray="3 1" />
      <rect x="4" y="12" width="4" height="4" fill="#2a88ae" />
    </>
  ),
  dim: (
    <>
      <path d="M4 2V16M16 2V16" stroke="#2a88ae" strokeWidth="1.6" />
      <path d="M5 8H15" stroke="#2a88ae" strokeWidth="1.4" />
      <path d="M2 18H18" stroke="#d4202c" strokeWidth="1.8" />
    </>
  ),
  screen: (
    <>
      <path d="M1 2H19V15L15 18H5L1 15Z" fill="#6f7a80" />
      <path d="M3 4H17V10C12 9 8 12 3 10Z" fill="#49535a" />
    </>
  ),
  layers: (
    <>
      <path d="M1 10 9 5 19 8 11 14Z" fill="#38b0c4" />
      <path d="M1 10 11 14V17L1 13ZM11 14 19 8V11L11 17Z" fill="#197588" />
    </>
  ),
  bulb: (
    <>
      <path d="M10 2C5 2 4 8 7 11L8 15H12L13 11C16 8 15 2 10 2Z" fill="#fff6bf" stroke="#88803a" />
      <path d="M8 17H12" stroke="#555" strokeWidth="1.4" />
    </>
  ),
  sun: (
    <>
      <rect x="1" y="1" width="18" height="18" rx="3" fill="#a9cfe2" />
      <circle cx="10" cy="10" r="7.6" fill="url(#yl)" />
    </>
  ),
  panelTab: (
    <>
      <rect x="3" y="5" width="14" height="11" fill="none" stroke="#7d8083" />
      <rect x="7" y="9" width="6" height="3" fill="none" stroke="#7d8083" />
    </>
  ),
  closeGray: <path d="M5 4 10 9 15 4 17 6 12 11 17 16 15 18 10 13 5 18 3 16 8 11 3 6Z" fill="#f0f1f2" stroke="#9a9da0" />,
  monitor: (
    <>
      <rect x="2" y="3" width="16" height="11" fill="#4cc4e0" />
      <rect x="7" y="15" width="6" height="3" fill="#444" />
    </>
  ),
  list: (
    <>
      <rect x="3" y="2" width="14" height="16" fill="#fff" stroke="#3b68b8" />
      <path d="M3 3H17V6H3Z" fill="#3b68b8" />
      <path d="M5 9H15M5 12H15M5 15H15" stroke="#5a6f96" />
    </>
  ),
  tools: (
    <>
      <rect x="2" y="2" width="16" height="16" fill="#fff" stroke="#3b68b8" />
      <path d="M2 2H18V5H2Z" fill="#7aa0dc" />
      <path d="M7 7H15V9H12V17H10V9H7Z" fill="#b8261e" />
      <path d="M4 7V8M4 10V11M4 13V14" stroke="#3b68b8" />
    </>
  ),
};
const Glyph = ({ n, s = 18 }: { n: string; s?: number }) => <Art s={s} vb={20}>{small[n]}</Art>;

const CloseX = ({ c = "#7a6a48" }: { c?: string }) => (
  <svg width="11" height="11" viewBox="0 0 10 10"><path d="M1 1 9 9M9 1 1 9" stroke={c} strokeWidth="1.6" /></svg>
);
const WinMin = () => <svg width="14" height="14" viewBox="0 0 14 14"><rect x="2" y="9" width="10" height="3" fill="none" stroke="#9c9fa2" /></svg>;
const WinMax = () => <svg width="14" height="14" viewBox="0 0 14 14"><path d="M5 1H13V9H10M1 4H10V13H1Z" fill="none" stroke="#9c9fa2" /></svg>;

/* ---------- tree data ---------- */
const PlaneIcon = () => (
  <svg width="15" height="15" viewBox="0 0 15 15">
    <rect x=".5" y=".5" width="14" height="14" fill="#cfe6f0" stroke="#3d8fb2" />
    <rect x="7" y="2" width="6" height="5" fill="#fff" />
    <path d="M3 3V6M3 9V12M9 9H12V12" stroke="#d4202c" />
  </svg>
);
const BlockIcon = () => (
  <svg width="17" height="14" viewBox="0 0 17 14">
    <path d="M1 4 7 1H16L12 5Z" fill="#4cc4e8" />
    <path d="M1 4 12 5V12L1 10Z" fill="url(#bl)" />
    <path d="M12 5 16 1V8L12 12Z" fill="#0b6f98" />
  </svg>
);
const CylIcon = () => (
  <svg width="15" height="16" viewBox="0 0 15 16">
    <path d="M4 2V14C4 16 11 16 11 14V2Z" fill="url(#bh)" />
    <ellipse cx="7.5" cy="2" rx="3.5" ry="1.6" fill="#78d8f0" />
  </svg>
);
const FilletIcon = () => (
  <svg width="17" height="15" viewBox="0 0 17 15">
    <path d="M1 5 5 1H11C14 2 16 5 16 8L8 11Z" fill="url(#yl)" stroke="#c98a10" strokeWidth=".4" />
    <path d="M1 5 8 9V14L1 10Z" fill="url(#bl)" />
    <path d="M1 5 5 1 8 3 4 6Z" fill="#4cc4e8" />
  </svg>
);
const MirrorIcon = () => (
  <svg width="16" height="12" viewBox="0 0 16 12">
    <path d="M1 6 9 1 15 5 7 11Z" fill="#2ba6cc" />
    <path d="M1 6 7 11V12L1 8Z" fill="#0b6f98" />
    <circle cx="8" cy="5" r="1.6" fill="#e05020" />
  </svg>
);
const Folder = ({ open }: { open?: boolean }) => (
  <svg width="16" height="15" viewBox="0 0 16 15">
    <path d="M1 3H6L8 5H14V14H1Z" fill="url(#yl)" stroke="#a8301c" />
    {open && <path d="M1 14 4 7H16L13 14Z" fill="#ffd45c" stroke="#a8301c" />}
  </svg>
);
const PartIcon = () => (
  <svg width="17" height="16" viewBox="0 0 17 16">
    <rect x="6" y="1" width="6" height="5" fill="#1f8cb4" />
    <path d="M8.5 6V9M3 12V9H14V12" fill="none" stroke="#1f6e90" />
    <rect x="1" y="12" width="5" height="3.4" fill="#1f8cb4" />
    <rect x="11" y="12" width="5" height="3.4" fill="#1f8cb4" />
  </svg>
);
const Check = () => (
  <svg width="11" height="11" viewBox="0 0 11 11"><path d="M1.5 6 4.5 9 9.5 2" fill="none" stroke="#15b31f" strokeWidth="2.2" /></svg>
);

const features: [string, React.ReactNode][] = [
  ["XY", <PlaneIcon />], ["XZ", <PlaneIcon />], ["YZ", <PlaneIcon />],
  ["Block1_Base", <BlockIcon />], ["Block2_Cut", <BlockIcon />], ["Block4_Boss", <BlockIcon />],
  ["Cylinder1_Cut", <CylIcon />], ["Fillet1", <FilletIcon />], ["Block5_Boss", <BlockIcon />],
  ["Mirror1", <MirrorIcon />], ["Fillet2", <FilletIcon />], ["Cylinder2_Cut", <CylIcon />], ["Chamfer1", <FilletIcon />],
];

const fillerRows = Array.from({ length: 20 }, (_, i) => i);

const replayTop: [React.ReactNode, boolean][] = [
  [<path d="M6 4 16 10 6 16Z" fill="#35b4e0" />, true],
  [<path d="M4 4 12 10 4 16ZM13 4H16V16H13Z" fill="#a3a6a8" />, false],
  [<path d="M8 6 14 10 8 14ZM5 3C1 8 1 12 5 17M15 3C19 8 19 12 15 17" fill="#a3a6a8" stroke="#a3a6a8" strokeWidth="1.4" />, false],
  [<path d="M5 6 11 10 5 14ZM13 4H15V16H13ZM3 3C0 8 0 12 3 17M17 3C20 8 20 12 17 17" fill="#a3a6a8" stroke="#a3a6a8" strokeWidth="1.2" />, false],
  [<path d="M2 4 10 10 2 16ZM10 4 18 10 10 16Z" fill="#b0b3b5" />, false],
  [<path d="M18 4 10 10 18 16ZM10 4 2 10 10 16Z" fill="#b0b3b5" />, false],
];
const replayBottom: React.ReactNode[] = [
  <path d="M3 17 8 12M12 8 17 3M6 9C9 5 11 6 11 9M14 11C11 15 9 14 9 11" fill="none" stroke="#a3a6a8" strokeWidth="2" />,
  <path d="M3 17 5 12 15 2 18 5 8 15Z" fill="#d7d9db" stroke="#a3a6a8" />,
  <path d="M3 18 7 10 5 5M7 10 12 13 11 18M7 8 13 9M13 5H19V10H13Z" fill="none" stroke="#a3a6a8" strokeWidth="2" />,
  <path d="M3 3 17 17M17 3 3 17" stroke="#818486" strokeWidth="3.4" />,
  <rect x="3" y="4" width="14" height="13" fill="#b4b6b8" />,
];

/* ---------- CAD model, drawn on a 3x grid of the page ---------- */
const FACE = "#9bbac8";
const DARK = "#4f6069";
const EDGE = { stroke: "#11181c", strokeWidth: 2.6, strokeLinejoin: "round" as const };

const EarHole = ({ cx, cy, id }: { cx: number; cy: number; id: string }) => (
  <>
    <clipPath id={id}>
      <ellipse cx={cx} cy={cy} rx="134" ry="176" transform={`rotate(-15 ${cx} ${cy})`} />
    </clipPath>
    <ellipse cx={cx - 6} cy={cy + 2} rx="156" ry="198" transform={`rotate(-15 ${cx} ${cy})`} fill={FACE} {...EDGE} />
    <ellipse cx={cx} cy={cy} rx="134" ry="176" transform={`rotate(-15 ${cx} ${cy})`} fill="url(#wall)" {...EDGE} />
    <g clipPath={`url(#${id})`}>
      <ellipse cx={cx + 155} cy={cy - 50} rx="134" ry="176" transform={`rotate(-15 ${cx + 155} ${cy - 50})`} fill="#e8e8e8" {...EDGE} />
    </g>
  </>
);

const CadModel = () => (
  <g transform="translate(400 47) scale(0.33333)">
    {/* rear ear */}
    <path d="M860 105C920 75 970 55 1030 55 1120 60 1210 100 1300 170 1370 250 1400 350 1395 490L1245 545C1245 360 1130 210 1030 145L970 120Z" fill="url(#earB)" {...EDGE} />
    <path d="M975 122 1115 65 1175 90 1030 145Z" fill={FACE} {...EDGE} />
    <path d="M1245 545 1395 490 1340 945 1205 960Z" fill={DARK} {...EDGE} />
    <path d="M725 195C770 135 830 108 880 106 920 105 950 112 975 122L1030 145C1130 210 1245 360 1245 545L1205 845 1000 1000 800 800Z" fill={FACE} {...EDGE} />
    <EarHole cx={968} cy={432} id="holeB" />
    {/* boss between the ears */}
    <path d="M1005 795 1090 795 1005 826Z" fill="#6e828c" />
    <path d="M1000 825 1100 790 1160 812 1000 870Z" fill={FACE} {...EDGE} />
    <path d="M1000 870 1160 812C1220 850 1260 910 1262 968L1258 995 1045 1065C1040 1000 1020 950 985 920Z" fill="url(#bump)" {...EDGE} />
    <path d="M985 920C1020 950 1040 1000 1045 1065L1035 1095 968 1072Z" fill={FACE} {...EDGE} />
    <path d="M1262 965 1345 938 1420 968 1258 1022Z" fill={FACE} {...EDGE} />
    <path d="M873 1155 1035 1095 1045 1065 1258 995 1258 1022 1420 968 1296 1975 748 2162Z" fill={DARK} {...EDGE} />
    {/* front ear */}
    <path d="M480 238C530 205 600 183 660 186 720 190 800 225 880 285 980 380 1030 500 1030 618L872 668C875 480 780 340 650 272L590 255Z" fill="url(#earA)" {...EDGE} />
    <path d="M590 255 740 198 800 224 650 274Z" fill={FACE} {...EDGE} />
    <path d="M872 668 1030 618 968 1072 815 1122Z" fill={DARK} {...EDGE} />
    <path d="M815 1122 968 1072 1035 1095 873 1155 792 1122Z" fill={FACE} {...EDGE} />
    <path d="M850 640 872 668 815 1122 792 1122Z" fill={FACE} {...EDGE} />
    <path d="M165 885 250 858 248 915Z" fill={FACE} {...EDGE} />
    <path d="M305 465C325 340 400 240 480 238 520 235 560 245 590 255L650 272C760 325 875 470 875 640L850 640 400 500Z" fill={FACE} {...EDGE} />
    {/* slot */}
    <path d="M345 1300 630 1415 572 1865 261 1970Z" fill={DARK} {...EDGE} />
    <path d="M323 1280 345 1300 261 1970 238 1968Z" fill={FACE} {...EDGE} />
    <path d="M323 1280 635 1400 630 1415 345 1300Z" fill="#c5dde6" {...EDGE} />
    {/* front face */}
    <path d="M165 885 248 915 305 465C335 340 410 262 480 258 520 256 565 262 590 268L650 290C760 340 848 470 850 640L792 1122 873 1155 748 2162 548 2086 635 1400 323 1280 238 1968 38 1892Z" fill={FACE} {...EDGE} />
    <EarHole cx={585} cy={565} id="holeA" />
    <path d="M660 430 640 620" stroke="#11181c" strokeWidth="2.4" />
    <path d="M640 625 680 630 722 660 690 685Z" fill={FACE} stroke="#11181c" strokeWidth="2" />
    {/* work plane triad */}
    <g opacity=".42" fill="none" stroke="#54707e" strokeWidth="2.4">
      <path d="M640 915 800 830M640 915 800 1000M715 790 830 820 830 1000 715 1055 715 790M740 840 690 1000 830 1030" />
    </g>
    <g opacity=".72">
      <path d="M800 925V830" stroke="#7f8fe6" strokeWidth="14" />
      <path d="M787 842 805 805 820 842Z" fill="#8f9df0" />
      <path d="M800 925 860 905" stroke="#5da860" strokeWidth="9" />
      <circle cx="852" cy="906" r="12" fill="#4e9e56" />
      <path d="M795 930 895 965" stroke="#c85a5a" strokeWidth="11" />
      <text x="804" y="790" fontFamily="Open Sans, sans-serif" fontSize="42" fill="#8f9df0">Z</text>
      <text x="880" y="905" fontFamily="Open Sans, sans-serif" fontSize="36" fill="#6aa86e">Y</text>
      <text x="912" y="992" fontFamily="Open Sans, sans-serif" fontSize="38" fill="#b86060">X</text>
    </g>
  </g>
);

const Triad = () => (
  <g>
    <path d="M56 729V700" stroke="#1818e0" strokeWidth="6" />
    <path d="M50 704 57 686 64 704Z" fill="#2a3cf0" />
    <path d="M58 727 78 719" stroke="#0f9a1a" strokeWidth="5" />
    <path d="M74 712 86 717 78 725Z" fill="#18b428" />
    <path d="M56 729 82 737" stroke="#e01414" strokeWidth="6" />
    <path d="M78 730 94 742 76 744Z" fill="#f01c1c" />
    <text x="57" y="682" fontFamily="Open Sans, sans-serif" fontSize="15" fill="#2020e8">Z</text>
    <text x="85" y="722" fontFamily="Open Sans, sans-serif" fontSize="14" fill="#22dd22">Y</text>
    <text x="95" y="752" fontFamily="Open Sans, sans-serif" fontSize="15" fill="#f01414">X</text>
  </g>
);

export default function App() {
  return (
    <>
      <GlobalStyle />
      <Screen>
        <Defs />
        <MouseGlow />
        <TitleBar>
          <Slot $w={16}><Glyph n="logo" /></Slot>
          <Slot $w={8}><ToolSep $w={1} /></Slot>
          <Slot $w={6} />
          {["newDoc", "open", "save", "print", "undo", "redo", "rotate"].map((n) => (
            <Slot $w={24} key={n}><Glyph n={n} s={20} /></Slot>
          ))}
          <Slot $w={10} $ml={-2}><Caret /></Slot>
          <Slot $w={18}><Glyph n="bars" s={14} /></Slot>
          <Slot $w={14}><Glyph n="leftBlue" s={14} /></Slot>
          <Slot $w={6} />
          {menus.map(([label, w]) => <MenuItem $w={w} key={label}>{label}</MenuItem>)}
          <TitleText>ZW3D 2018 RC x64 - [Part009.Z3]</TitleText>
          <WindowButtons>
            <WinMin /><Slot $w={9} /><WinMax /><Slot $w={11} /><Slot $w={16}><CloseX c="#b3b6b8" /></Slot>
          </WindowButtons>
        </TitleBar>

        <TabsRow>
          <FileTab>File</FileTab>
          {ribbonTabs.map(([label, w], i) => <RibbonTab $w={w} $active={i === 0} key={label}>{label}</RibbonTab>)}
          <TabTools>
            <Slot $w={20}><Glyph n="up" s={15} /></Slot>
            <Slot $w={48} $ml={6}><Glyph n="gear" s={20} /></Slot>
            <Slot $w={20}><Glyph n="help" s={20} /></Slot>
            <Slot $w={16}><Caret /></Slot>
            <Slot $w={16}><svg width="10" height="10" viewBox="0 0 10 10"><path d="M1 8H9" stroke="#111" strokeWidth="2.4" /></svg></Slot>
            <Slot $w={18}><svg width="11" height="11" viewBox="0 0 11 11"><path d="M3 3V1H10V7H8M1 3H8V10H1Z" fill="none" stroke="#111" strokeWidth="1.5" /></svg></Slot>
            <Slot $w={18}><CloseX c="#111" /></Slot>
          </TabTools>
        </TabsRow>

        <Ribbon>
          {groups.map((g) => (
            <RibbonGroup $w={g.w} key={g.title}>
              <GroupItems $pad={g.pad}>
                {g.tools.map((t) => (
                  <ToolButton $w={t.w} $hot={t.id === "sketch"} key={t.id}>
                    <ToolIcon><Art s={38}>{ribbonArt[t.id]}</Art></ToolIcon>
                    {t.lines.map((l, i) => (
                      <ToolLabel key={l}>
                        {l}
                        {t.caret === "inline" && i === t.lines.length - 1 && <LabelCaret />}
                        {t.caret === "side" && i === t.lines.length - 1 && <SideCaret />}
                      </ToolLabel>
                    ))}
                    {t.caret === "below" && <BelowCaret />}
                  </ToolButton>
                ))}
              </GroupItems>
              <GroupTitle>{g.title}</GroupTitle>
            </RibbonGroup>
          ))}
        </Ribbon>

        <Toolbar>
          <Grip />
          <HotToggle $w={23} $ml={2}><Glyph n="cursor" /></HotToggle>
          <Slot $w={24}><Glyph n="plus" /></Slot>
          <Slot $w={24}><Glyph n="minus" /></Slot>
          <Slot $w={22}><Glyph n="dotBox" /></Slot>
          <Slot $w={12}><Caret /></Slot>
          <Slot $w={26}><Glyph n="hex" /></Slot>
          <ToolSep $w={6} />
          <Slot $w={22}><Glyph n="filter" /></Slot>
          <Combo $w={100} $ml={4}>All<Caret /></Combo>
          <HotToggle $w={23} $ml={4}><Glyph n="asm" /></HotToggle>
          <Combo $w={137} $ml={1}>Entire Assembly<Caret /></Combo>
          <Slot $w={24}><Glyph n="gray1" /></Slot>
          <Slot $w={24}><Glyph n="gray2" /></Slot>
          <ToolSep $w={8} />
          <Slot $w={16}><Glyph n="gray3" /></Slot>
          <Slot $w={24} $ml={3}><Glyph n="gray4" /></Slot>
          <Slot $w={24}><Glyph n="gray5" /></Slot>
          <Slot $w={24} $ml={3}><Glyph n="gray6" /></Slot>
          <ToolSep $w={7} />
          <Slot $w={24}><Glyph n="gray7" /></Slot>
          <Combo $w={102} $ml={3} $off>Normal<Caret /></Combo>
          <Slot $w={22}><Glyph n="gray8" /></Slot>
          <Slot $w={26}><Glyph n="gray9" /></Slot>
        </Toolbar>

        <Main>
          <LeftColumn>
            <ManagerHead>
              Manager
              <HeadIcons><Glyph n="panelTab" s={14} /><Glyph n="closeGray" s={15} /></HeadIcons>
            </ManagerHead>
            <ManagerBody>
              <Rail>
                <RailTab $active>
                  <svg width="26" height="28" viewBox="0 0 26 28">
                    <path d="M2 7 9 3 16 7 9 11Z" fill="#a8e0f0" />
                    <path d="M2 7 9 11V19L2 15Z" fill="#3fb4d8" />
                    <path d="M9 11 16 7V15L9 19Z" fill="#15799f" />
                    <path d="M12 14V26M18 8H24M12 21H18" stroke="#6a6d70" />
                    <rect x="18" y="18" width="6" height="5" fill="#fff" stroke="#6a6d70" />
                  </svg>
                </RailTab>
                <RailTab>
                  <svg width="26" height="26" viewBox="0 0 26 26">
                    <rect x="9" y="2" width="9" height="7" fill="#2f9dc4" />
                    <path d="M13 9V13M5 17V13H21V17" fill="none" stroke="#4c7f96" />
                    <rect x="1" y="17" width="10" height="7" fill="#2f9dc4" />
                    <rect x="15" y="17" width="10" height="7" fill="#cfe8f2" stroke="#2f9dc4" />
                  </svg>
                </RailTab>
                <RailTab>
                  <svg width="26" height="26" viewBox="0 0 26 26">
                    <rect x="1" y="1" width="24" height="24" fill="#d7edf6" stroke="#7fb6cc" />
                    <path d="M1 1H25V5H1Z" fill="#7fc0dc" />
                    <path d="M6 11 13 7 20 11 13 15Z" fill="#ffe27a" />
                    <path d="M6 11 13 15V22L6 18Z" fill="url(#yl)" />
                    <path d="M13 15 20 11V18L13 22Z" fill="#d98f10" />
                  </svg>
                </RailTab>
                <RailTab>
                  <svg width="26" height="26" viewBox="0 0 26 26">
                    <rect x="1" y="1" width="24" height="24" fill="#8fd0e4" />
                    <path d="M1 14C8 4 12 10 16 12 20 14 22 12 25 14V25H1Z" fill="#2c92ba" />
                    <circle cx="20" cy="6" r="4" fill="#f0a11e" />
                    <path d="M2 17H14M14 13V21L19 17Z" fill="#e2502a" stroke="#e2502a" strokeWidth="1.6" />
                  </svg>
                </RailTab>
                <RailTab>
                  <svg width="26" height="24" viewBox="0 0 26 24">
                    <circle cx="17" cy="7" r="5" fill="#f2b02a" />
                    <path d="M10 22C10 15 24 13 26 22Z" fill="#e8951a" />
                    <circle cx="10" cy="9" r="5.4" fill="#2f9dc4" />
                    <path d="M0 23C1 15 19 15 20 23Z" fill="#1f86ad" />
                  </svg>
                </RailTab>
              </Rail>
              <ManagerMain>
                <FilterRow>
                  <Combo $w={160}>Show Most<Caret /></Combo>
                  <SearchBox />
                </FilterRow>
                <TreePanel>
                  <TreeRow $alt={false} $indent={5}><RowIcon><PartIcon /></RowIcon>Part009</TreeRow>
                  <TreeRow $alt $indent={0}>
                    <Chevron><svg width="8" height="10" viewBox="0 0 8 10"><path d="M2 1 6 5 2 9" fill="none" stroke="#aaa" strokeWidth="1.4" /></svg></Chevron>
                    <RowIcon><Folder /></RowIcon>Solid(1)
                  </TreeRow>
                  <TreeRow $alt={false} $indent={0}>
                    <Chevron><svg width="10" height="8" viewBox="0 0 10 8"><path d="M1 2 5 6 9 2" fill="none" stroke="#555" strokeWidth="1.4" /></svg></Chevron>
                    <RowIcon><Folder open /></RowIcon>History
                  </TreeRow>
                  {features.map(([label, icon], i) => (
                    <TreeRow $alt={i % 2 === 0} $indent={32} key={label}>
                      <CheckBox><Check /></CheckBox>
                      <RowIcon>{icon}</RowIcon>
                      {label}
                    </TreeRow>
                  ))}
                  <TreeRow $alt={false} $indent={32}>
                    <svg width="16" height="11" viewBox="0 0 16 11"><path d="M0 5.5 7 0V3H15V8H7V11Z" fill="#ee1b2c" /></svg>
                    <StopText>----- MODEL STOP HERE -----</StopText>
                  </TreeRow>
                  {fillerRows.map((i) => <TreeRow $alt={i % 2 === 0} $indent={0} key={i} />)}
                </TreePanel>
                <ReplayHead><ReplayCaret />Replay</ReplayHead>
                <ReplayPanel>
                  <ReplayRow>
                    {replayTop.map(([art, on], i) => <ReplayButton $on={on} key={i}><Art s={20} vb={20}>{art}</Art></ReplayButton>)}
                  </ReplayRow>
                  <ReplayRow>
                    {replayBottom.map((art, i) => <ReplayButton key={i}><Art s={20} vb={20}>{art}</Art></ReplayButton>)}
                  </ReplayRow>
                </ReplayPanel>
              </ManagerMain>
            </ManagerBody>
          </LeftColumn>

          <RightColumn>
            <DocTabs>
              <DocTab $w={111} $pl={33}>Part006.Z3<CloseX /></DocTab>
              <DocTab $w={119} $pl={41}>Part007.Z3<CloseX /></DocTab>
              <DocTab $w={130} $pl={40}>Part008.Z3<CloseX /></DocTab>
              <DocTab $w={114} $pl={11} $active>
                <svg width="11" height="11" viewBox="0 0 11 11"><path d="M5.5 0V11M0 5.5H11" stroke="#6a5a3a" strokeWidth="1.8" /></svg>
                Part009.Z3<CloseX />
              </DocTab>
              <Slot $w={28}><svg width="12" height="12" viewBox="0 0 12 12"><path d="M6 0V12M0 6H12" stroke="#a9acae" strokeWidth="1.8" /></svg></Slot>
              <DocTabsEnd>
                <svg width="14" height="12" viewBox="0 0 14 12"><path d="M2 2H12M2 5H12L7 10Z" fill="#a5a8aa" stroke="#a5a8aa" /></svg>
              </DocTabsEnd>
            </DocTabs>
            <Viewport>
              <ModelCanvas>
                <CadModel />
                <Triad />
              </ModelCanvas>
              <ViewBar>
                <Slot $w={24}><Glyph n="exit" /></Slot>
                <Slot $w={26}><Glyph n="network" /></Slot>
                <Slot $w={10}><Caret /></Slot>
                <Slot $w={20} $ml={7}><Glyph n="eraser" /></Slot>
                <Slot $w={30}><Glyph n="shade" /></Slot>
                <Slot $w={24}><Glyph n="cube" /></Slot>
                <Slot $w={8}><Caret /></Slot>
                <Slot $w={26} $ml={4}><Glyph n="wire" /></Slot>
                <Slot $w={8}><Caret /></Slot>
                <Slot $w={26} $ml={4}><Glyph n="ball" /></Slot>
                <Slot $w={8}><Caret /></Slot>
                <Slot $w={26} $ml={4}><Glyph n="ring" /></Slot>
                <Slot $w={10}><Caret /></Slot>
                <Slot $w={30}><Glyph n="rect" /></Slot>
                <Slot $w={20}><Glyph n="dim" /></Slot>
                <Slot $w={8} $ml={4}><Caret /></Slot>
                <Slot $w={26} $ml={4}><Glyph n="screen" /></Slot>
                <Slot $w={8}><Caret /></Slot>
                <Slot $w={27} $ml={4}><svg width="18" height="8"><rect width="18" height="8" fill="#000" /></svg></Slot>
                <Slot $w={24}><svg width="18" height="18"><rect x=".5" y=".5" width="17" height="17" fill="#b6e2f6" stroke="#111" /></svg></Slot>
                <Slot $w={28}><Glyph n="layers" /></Slot>
                <Slot $w={6}><Caret /></Slot>
                <Combo $w={120} $ml={7}>
                  <Slot $w={18}><Glyph n="bulb" s={16} /></Slot>
                  <Slot $w={16}><Glyph n="sun" s={16} /></Slot>
                  <MenuItem $w={56}>Layer0000</MenuItem>
                  <Slot $w={20}><Caret /></Slot>
                </Combo>
              </ViewBar>
              <Hints>
                You can set the hotkey in Customize Settings.<br />
                Click "Help/Show Hints" to disable these hints.
              </Hints>
              <Distance>130.53 mm</Distance>
            </Viewport>
          </RightColumn>
        </Main>

        <StatusBar>
          Select command or entity.
          <StatusTools>
            <StatusSep />
            <StatusHot $w={23}><Glyph n="tools" s={18} /></StatusHot>
            <Slot $w={34}><Glyph n="monitor" /></Slot>
            <Slot $w={24}><Glyph n="list" /></Slot>
            <StatusField />
          </StatusTools>
        </StatusBar>
      </Screen>
    </>
  );
}
